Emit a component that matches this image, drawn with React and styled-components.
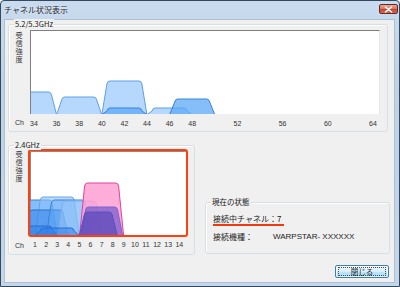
import React from 'react';
import styled, { createGlobalStyle } from 'styled-components';

const GlobalStyle = createGlobalStyle`
  html, body {
    margin: 0;
    padding: 0;
    background: #ffffff;
  }
  * {
    box-sizing: border-box;
  }
`;

const JP = `"Noto Sans CJK JP", "Liberation Sans", sans-serif`;
const LATIN = `"Liberation Sans", "Noto Sans CJK JP", sans-serif`;

const ch5 = (c) => 34 + (c - 34) * 11.3;
const ch24 = (c) => 35 + (c - 1) * 11.1;

// trapezoid with rounded top corners, x0/x1 = bottom edges
const trap = (x0, x1, top, bottom, inset = 5, r = 3) => {
  const l = x0 + inset;
  const rr = x1 - inset;
  return `M${x0} ${bottom} L${l} ${top + r} Q${l + 0.6} ${top} ${l + r} ${top} L${rr - r} ${top} Q${rr - 0.6} ${top} ${rr} ${top + r} L${x1} ${bottom} Z`;
};

const LIGHT = { fill: '#a9d1fd', op: 0.85, stroke: '#5d9fe8' };
const MID = { fill: '#5ea8f6', op: 0.75, stroke: '#3a80dc' };
const DARK = { fill: '#2f7fe8', op: 0.55, stroke: '#2a6fd0' };

const shapes5 = [
  { c: 34, top: 92, ...LIGHT },
  { c: 38, top: 97, ...LIGHT },
  { c: 42, top: 81, ...LIGHT },
  { c: 42, top: 108, ...MID },
  { c: 46, top: 108, ...LIGHT },
  { c: 48, top: 99, ...MID },
];

const shapes24 = [
  { c: 1, top: 200, ...MID },
  { c: 3, top: 197, fill: '#8ec2fa', op: 0.6, stroke: '#6aa5ea' },
  { c: 2, top: 210, ...DARK },
  { c: 4, top: 200, ...MID, op: 0.55 },
  { c: 5, top: 201, fill: '#9cc8f8', op: 0.5, stroke: '#79aee8' },
  { c: 1, top: 226, ...DARK },
  { c: 3, top: 228, ...DARK },
  { c: 7, top: 183, fill: '#ff9fd2', op: 0.85, stroke: '#e0409c' },
  { c: 7, top: 207, fill: '#5b4bc8', op: 0.6, stroke: '#7a62d6', half: 21 },
  { c: 6.7, top: 212, fill: '#3a36b0', op: 0.45, stroke: '#5a50c8', half: 19 },
];

const ticks5 = [34, 36, 38, 40, 42, 44, 46, 48, 52, 56, 60, 64];
const ticks24 = [1, 2, 3, 4, 5, 6, 7, 8, 9, 10, 11, 12, 13, 14];

export default function App() {
  return (
    <>
      <GlobalStyle />
      <Window>
        <TitleBar>
          <Title>チャネル状況表示</Title>
          <CloseButton>
            <svg width="9" height="7" viewBox="0 0 9 7">
              <path d="M1.5 1 L7.5 6 M7.5 1 L1.5 6" stroke="#ffffff" strokeWidth="1.6" strokeLinecap="round" />
            </svg>
          </CloseButton>
        </TitleBar>
        <Client>
          <Group $width={380} $height={108}>
            <Legend>5.2/5.3GHz</Legend>
            <ChartGrid $labelCol={15} $plotCol={350} $plotRow={84}>
              <VerticalLabel>受信強度</VerticalLabel>
              <Plot5>
                <svg width="348" height="83" viewBox="31 31 348 83">
                  {shapes5.map((s, i) => (
                    <path
                      key={i}
                      d={trap(ch5(s.c) - 22.5, ch5(s.c) + 22.5, s.top, 114.5)}
                      fill={s.fill}
                      fillOpacity={s.op}
                      stroke={s.stroke}
                      strokeWidth="1"
                    />
                  ))}
                </svg>
              </Plot5>
              <ChLabel>Ch</ChLabel>
              <svg width="350" height="17" viewBox="30 114 350 17">
                {ticks5.map((c) => (
                  <TickText key={c} x={ch5(c)} y="126" textAnchor="middle">
                    {c}
                  </TickText>
                ))}
              </svg>
            </ChartGrid>
          </Group>
          <BottomRow>
            <Group $width={187} $height={110}>
              <Legend>2.4GHz</Legend>
              <ChartGrid $labelCol={13} $plotCol={160} $plotRow={88} $top={3}>
                <VerticalLabel>受信強度</VerticalLabel>
                <Plot24>
                  <svg width="156" height="84" viewBox="30 151 156 84">
                    {shapes24.map((s, i) => {
                      const h = s.half || 22;
                      return (
                        <path
                          key={i}
                          d={trap(ch24(s.c) - h, ch24(s.c) + h, s.top, 235.5)}
                          fill={s.fill}
                          fillOpacity={s.op}
                          stroke={s.stroke}
                          strokeWidth="1"
                        />
                      );
                    })}
                  </svg>
                </Plot24>
                <ChLabel>Ch</ChLabel>
                <svg width="160" height="17" viewBox="28 237 160 17">
                  {ticks24.map((c) => (
                    <TickText key={c} x={ch24(c)} y="247" textAnchor="middle">
                      {c}
                    </TickText>
                  ))}
                </svg>
              </ChartGrid>
            </Group>
            <StatusGroup>
              <Legend>現在の状態</Legend>
              <StatusRow>
                <Underlined>接続中チャネル：7</Underlined>
              </StatusRow>
              <StatusRow $gap={6}>
                <StatusKey>接続機種：</StatusKey>
                <StatusValue>WARPSTAR- XXXXXX</StatusValue>
              </StatusRow>
            </StatusGroup>
          </BottomRow>
          <ButtonRow>
            <DialogButton>
              <FocusRing>閉じる</FocusRing>
            </DialogButton>
          </ButtonRow>
        </Client>
      </Window>
    </>
  );
}

const Window = styled.div`
  width: 400px;
  height: 287px;
  border: 1px solid #34495c;
  border-radius: 4px 4px 0 0;
  background: linear-gradient(#c9dbee, #bed2e8 30%, #c3d6ea);
  display: flex;
  flex-direction: column;
  font-family: ${JP};
  color: #1e1e1e;
`;

const TitleBar = styled.div`
  height: 19px;
  display: flex;
  align-items: flex-start;
  justify-content: space-between;
  padding-left: 3px;
`;

const Title = styled.div`
  font-size: 8px;
  line-height: 18px;
  color: #1b2430;
  text-shadow: 0 0 3px #ffffff;
`;

const CloseButton = styled.div`
  width: 19px;
  height: 10px;
  margin-top: 3px;
  margin-right: 1px;
  border: 1px solid #6b2a22;
  border-radius: 2px;
  background: linear-gradient(#e9a796, #d5705c 50%, #c24733 51%, #d2664d);
  display: flex;
  align-items: center;
  justify-content: center;
`;

const Client = styled.div`
  flex: 1;
  margin: 0 5px 4px 4px;
  background: #f0f0f0;
  box-shadow: 0 0 0 1px #aebfd1;
  display: flex;
  flex-direction: column;
`;

const Group = styled.div`
  position: relative;
  width: ${(p) => p.$width}px;
  height: ${(p) => p.$height}px;
  margin-left: 3px;
  margin-top: 4px;
  border: 1px solid #d5dfe5;
  border-radius: 3px;
  box-shadow: inset 1px 1px 0 #ffffff;
`;

const Legend = styled.span`
  position: absolute;
  top: -6px;
  left: 5px;
  padding: 0 1px;
  background: #f0f0f0;
  font-family: ${JP};
  font-size: 7.5px;
  line-height: 10px;
  color: #222;
`;

const ChartGrid = styled.div`
  display: grid;
  grid-template-columns: ${(p) => p.$labelCol}px ${(p) => p.$plotCol}px;
  grid-template-rows: ${(p) => p.$plotRow}px 17px;
  padding: ${(p) => p.$top ?? 5}px 0 0 6px;
`;

const VerticalLabel = styled.div`
  writing-mode: vertical-rl;
  text-orientation: upright;
  justify-self: start;
  align-self: start;
  width: 8px;
  margin-top: 2px;
  font-size: 7.2px;
  letter-spacing: 0.6px;
  line-height: 8px;
  color: #333;
`;

const Plot5 = styled.div`
  background: #ffffff;
  border-style: solid;
  border-width: 1px 1px 0 1px;
  border-color: #808080 #e6e6e6 #ffffff #808080;
  line-height: 0;
  overflow: hidden;
`;

const Plot24 = styled.div`
  background: #ffffff;
  border: 2px solid #ff400c;
  border-radius: 3px;
  box-shadow: inset 1px 1px 0 #8a8a8a;
  line-height: 0;
  overflow: hidden;
`;

const ChLabel = styled.div`
  font-family: ${LATIN};
  font-size: 7px;
  line-height: 17px;
  color: #333;
`;

const TickText = styled.text`
  font-family: ${LATIN};
  font-size: 7px;
  fill: #333;
`;

const BottomRow = styled.div`
  display: flex;
  align-items: flex-end;
  margin-top: 9px;
`;

const StatusGroup = styled.div`
  position: relative;
  width: 185px;
  height: 52px;
  margin-left: 10px;
  margin-bottom: 1px;
  border: 1px solid #d5dfe5;
  border-radius: 3px;
  box-shadow: inset 1px 1px 0 #ffffff;
  padding: 11px 0 0 7px;
  display: flex;
  flex-direction: column;
`;

const StatusRow = styled.div`
  display: flex;
  align-items: center;
  margin-top: ${(p) => p.$gap ?? 0}px;
  font-size: 8px;
  line-height: 10px;
`;

const Underlined = styled.span`
  display: inline-block;
  width: 71px;
  border-bottom: 2px solid #ee3a0e;
  white-space: nowrap;
`;

const StatusKey = styled.span`
  width: 60px;
`;

const StatusValue = styled.span`
  font-family: ${LATIN};
  font-size: 8px;
  color: #222;
`;

const ButtonRow = styled.div`
  display: flex;
  justify-content: flex-end;
  padding-right: 5px;
  margin-top: 10px;
`;

const DialogButton = styled.div`
  width: 54px;
  height: 13px;
  border: 1px solid #3c7fb1;
  border-radius: 2px;
  background: linear-gradient(#eaf6fd, #d9f0fc 50%, #bee6fd 51%, #a7d9f5);
  box-shadow: inset 0 0 0 1px rgba(255, 255, 255, 0.7);
  display: flex;
  align-items: center;
  justify-content: center;
`;

const FocusRing = styled.span`
  width: 48px;
  height: 9px;
  border: 1px dotted #4a4a4a;
  font-size: 7.5px;
  line-height: 7px;
  text-align: center;
  color: #1e1e1e;
`;
